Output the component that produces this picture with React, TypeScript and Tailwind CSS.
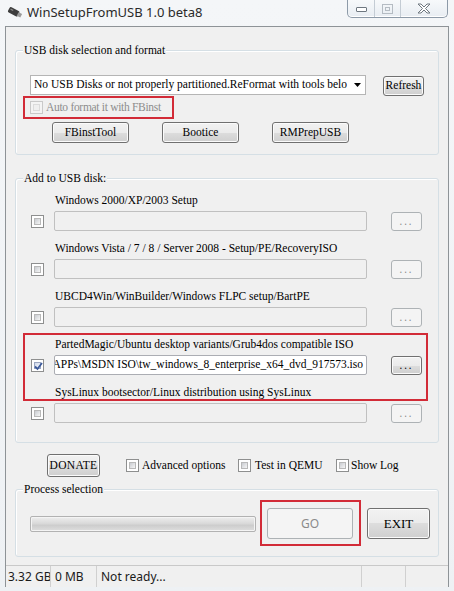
import React from "react";

const serif = "font-['Liberation_Serif',serif]";
const sans = "font-['Noto_Sans','Liberation_Sans',sans-serif]";

function Check({ checked = false, disabled = false }: { checked?: boolean; disabled?: boolean }) {
  return (
    <span
      className={`relative shrink-0 w-[13px] h-[13px] border ${
        disabled ? "border-[#c9c9c9] bg-[#f4f4f4]" : "border-[#8e8f8f] bg-white"
      } p-[2px] flex`}
    >
      <span
        className={`flex-1 ${
          disabled
            ? "bg-[#f0f0f0] border border-[#dcdcdc]"
            : checked
            ? "bg-[linear-gradient(135deg,#cfd8ea,#f4f7fc)] border border-[#9aa6c0]"
            : "bg-[linear-gradient(135deg,#c9ccd1,#f6f6f6)] border border-[#b9b9b9]"
        }`}
      />
      {checked && (
        <svg className="absolute left-[1px] top-[1px]" width="11" height="11" viewBox="0 0 11 11">
          <path d="M2 5.5 L4.5 8 L9 2" fill="none" stroke="#3c5a9a" strokeWidth="1.8" />
        </svg>
      )}
    </span>
  );
}

function Btn({
  className = "",
  disabled = false,
  children,
}: {
  className?: string;
  disabled?: boolean;
  children: React.ReactNode;
}) {
  return (
    <div
      className={`shrink-0 flex items-center justify-center rounded-[3px] border ${
        disabled
          ? "border-[#adb2b5] bg-[#f4f4f4] text-[#8a8a8a]"
          : "border-[#707070] bg-[linear-gradient(#f2f2f2,#ebebeb_50%,#dddddd_50%,#cfcfcf)] shadow-[inset_0_0_0_1px_#fbfbfb] text-black"
      } ${className}`}
    >
      {children}
    </div>
  );
}

function Group({
  title,
  className = "",
  children,
}: {
  title: string;
  className?: string;
  children: React.ReactNode;
}) {
  return (
    <div className={`relative ml-[9px] w-[424px] border border-[#d5dfe5] rounded-[3px] shadow-[inset_1px_1px_0_#ffffff] ${className}`}>
      <span className={`absolute left-[7px] -top-[9px] px-[1px] bg-[#f0f0f0] text-[11.5px] leading-[16px] ${serif}`}>
        {title}
      </span>
      {children}
    </div>
  );
}

const rows = [
  { label: "Windows 2000/XP/2003 Setup" },
  { label: "Windows Vista / 7 / 8 / Server 2008 - Setup/PE/RecoveryISO" },
  { label: "UBCD4Win/WinBuilder/Windows FLPC setup/BartPE" },
  {
    label: "PartedMagic/Ubuntu desktop variants/Grub4dos compatible ISO",
    value: "E:\\APPs\\MSDN ISO\\tw_windows_8_enterprise_x64_dvd_917573.iso",
  },
  { label: "SysLinux bootsector/Linux distribution using SysLinux" },
];

export default function App() {
  return (
    <div className="w-[454px] h-[591px] overflow-hidden bg-[linear-gradient(#f4f6f8,#eef1f4)]">
      {/* title bar */}
      <div className="h-[26px] flex items-start">
        <svg className="ml-[7px] mt-[6px]" width="16" height="13" viewBox="0 0 16 13">
          <g transform="rotate(28 8 6.5)">
            <rect x="1" y="3.5" width="11" height="6" rx="1.5" fill="#3d3d3d" />
            <rect x="11" y="4.5" width="4" height="4" fill="#9a9a9a" />
            <rect x="2.5" y="5" width="3" height="1.2" fill="#8a8a8a" />
          </g>
        </svg>
        <span className={`ml-[4px] mt-[3px] text-[13px] leading-[18px] text-[#2a2a2a] ${sans}`}>
          WinSetupFromUSB 1.0 beta8
        </span>
        <div className="ml-auto mr-[6px] flex h-[18px] border border-t-0 border-[#8d9aa8] rounded-b-[5px] bg-[linear-gradient(#f7f9fb,#e8edf2)] shadow-[inset_0_-1px_0_#ffffff]">
          <div className="w-[27px] flex items-center justify-center border-r border-[#c4ccd4]">
            <span className="w-[11px] h-[5px] mt-[1px] border border-[#6e7780] rounded-[1px] bg-white" />
          </div>
          <div className="w-[26px] flex items-center justify-center border-r border-[#c4ccd4]">
            <span className="w-[11px] h-[10px] border border-[#b5bcc3] flex items-center justify-center">
              <span className="w-[5px] h-[4px] border border-[#b5bcc3]" />
            </span>
          </div>
          <div className="w-[46px] flex items-center justify-center">
            <svg width="14" height="11" viewBox="0 0 14 11">
              <path
                d="M1 1 H4 L7 4 L10 1 H13 L8.5 5.5 L13 10 H10 L7 7 L4 10 H1 L5.5 5.5 Z"
                fill="#ffffff"
                stroke="#6f7880"
                strokeWidth="1"
                strokeLinejoin="round"
              />
            </svg>
          </div>
        </div>
      </div>

      {/* client area */}
      <div className="ml-[5px] w-[444px] h-[561px] border border-b-0 border-[#8e9397] bg-[#f0f0f0] flex flex-col">
        {/* USB disk selection */}
        <Group title="USB disk selection and format" className="mt-[23px] h-[105px]">
          <div className="mt-[24px] ml-[14px] flex items-start">
            <div className={`w-[336px] h-[20px] bg-white border border-[#b5b5b5] flex items-center pl-[3px] text-[11.5px] ${serif}`}>
              <span className="flex-1 whitespace-nowrap overflow-hidden">
                No USB Disks or not properly partitioned.ReFormat with tools belo
              </span>
              <svg className="mx-[4px]" width="7" height="4" viewBox="0 0 7 4">
                <path d="M0 0 H7 L3.5 4 Z" fill="#000" />
              </svg>
            </div>
            <Btn className={`ml-[17px] mt-[1px] w-[41px] h-[20px] text-[11.5px] ${serif}`}>Refresh</Btn>
          </div>
          <div className="ml-[7px] w-[151px] h-[23px] border-2 border-[#d22b37] flex items-center pl-[5px]">
            <Check disabled />
            <span className={`ml-[3px] text-[11.5px] tracking-[-0.3px] text-[#8d8d8d] whitespace-nowrap ${serif}`}>
              Auto format it with FBinst
            </span>
          </div>
          <div className={`mt-[3px] ml-[36px] flex gap-[33px] text-[11.5px] ${serif}`}>
            <Btn className="w-[77px] h-[21px]">FBinstTool</Btn>
            <Btn className="w-[77px] h-[21px]">Bootice</Btn>
            <Btn className="w-[77px] h-[21px]">RMPrepUSB</Btn>
          </div>
        </Group>

        {/* Add to USB disk */}
        <Group title="Add to USB disk:" className="mt-[23px] h-[265px] pt-[10px]">
          {rows.map((r, i) => (
            <div key={i} className="h-[48px]">
              <div className={`ml-[39px] h-[22px] leading-[22px] text-[11.5px] whitespace-nowrap ${serif}`}>{r.label}</div>
              <div className="flex items-center h-[20px]">
                <span className="ml-[15px]">
                  <Check checked={!!r.value} />
                </span>
                <div
                  className={`ml-[10px] w-[313px] h-[20px] border rounded-[2px] flex items-center justify-end overflow-hidden whitespace-nowrap pr-[3px] text-[11.5px] ${serif} ${
                    r.value ? "bg-white border-[#abadb3]" : "bg-[#f0f0f0] border-[#c0c0c0]"
                  }`}
                >
                  {r.value}
                </div>
                <Btn disabled={!r.value} className={`ml-[24px] w-[31px] h-[19px] text-[10px] tracking-[2px] ${sans}`}>
                  ...
                </Btn>
              </div>
            </div>
          ))}
          <div className="absolute left-[7px] top-[154px] w-[405px] h-[68px] border-2 border-[#d22b37]" />
        </Group>

        {/* options row */}
        <div className={`mt-[11px] ml-[41px] flex items-center text-[11.5px] ${serif}`}>
          <Btn className="w-[53px] h-[23px] tracking-[0.3px]">DONATE</Btn>
          <div className="ml-[26px] w-[112px] flex items-center">
            <Check />
            <span className="ml-[3px]">Advanced options</span>
          </div>
          <div className="w-[98px] flex items-center">
            <Check />
            <span className="ml-[4px]">Test in QEMU</span>
          </div>
          <div className="flex items-center">
            <Check />
            <span className="ml-[2px]">Show Log</span>
          </div>
        </div>

        {/* Process selection */}
        <Group title="Process selection" className="mt-[12px] h-[68px]">
          <div className="mt-[18px] ml-[14px] flex items-center h-[31px]">
            <div className="w-[226px] h-[16px] rounded-[2px] border border-[#b2b2b2] bg-[linear-gradient(#eeeeee,#dadada_45%,#cdcdcd_60%,#dedede)] shadow-[inset_0_0_0_1px_#f4f4f4]" />
            <Btn disabled className={`ml-[11px] w-[86px] h-[31px] text-[12px] ${sans}`}>GO</Btn>
            <Btn className={`ml-[14px] w-[63px] h-[31px] text-[13px] ${serif}`}>EXIT</Btn>
          </div>
          <div className="absolute left-[244px] top-[10px] w-[101px] h-[46px] border-2 border-[#d22b37]" />
        </Group>

        {/* status bar */}
        <div className={`mt-auto h-[22px] border-t border-[#c9c9c9] bg-[#f0f0f0] flex items-center text-[12px] text-[#1a1a1a] ${sans}`}>
          <div className="w-[44px] pl-[2px] overflow-hidden whitespace-nowrap">3.32 GB</div>
          <div className="h-full border-l border-[#d0d0d0] w-[46px] pl-[4px] flex items-center whitespace-nowrap">0 MB</div>
          <div className="h-full border-l border-[#d0d0d0] w-[265px] pl-[4px] flex items-center">Not ready...</div>
          <div className="h-full border-l border-[#d0d0d0] w-[44px]" />
          <div className="h-full border-l border-[#d0d0d0] flex-1" />
        </div>
      </div>
    </div>
  );
}
